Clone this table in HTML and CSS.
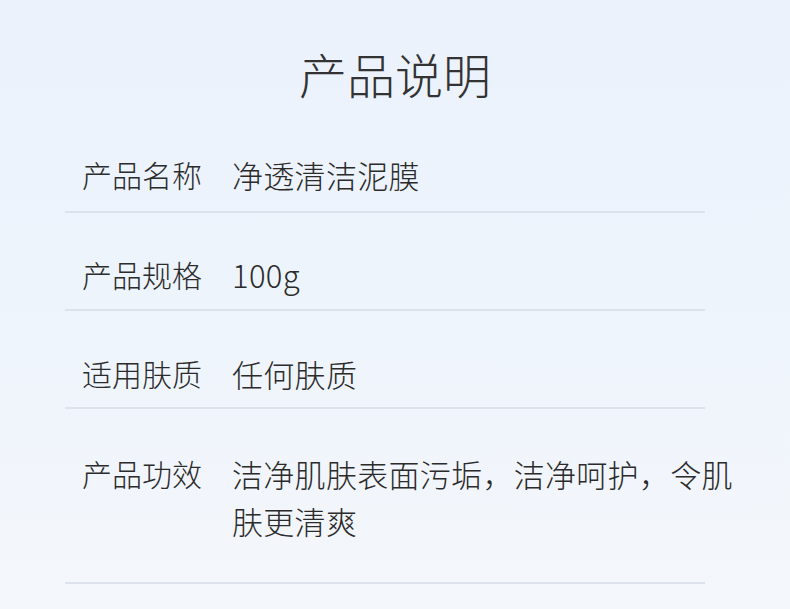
FILE: index.html
```html
<!DOCTYPE html>
<html lang="zh-CN">
<head>
<meta charset="utf-8">
<title>产品说明</title>
<link rel="stylesheet" href="styles.css">
</head>
<body>
<main class="page">
  <h1 class="title">产品说明</h1>
  <div class="table">
    <div class="row row-first">
      <div class="label">产品名称</div>
      <div class="value">净透清洁泥膜</div>
    </div>
    <div class="row">
      <div class="label">产品规格</div>
      <div class="value">100g</div>
    </div>
    <div class="row row-third">
      <div class="label">适用肤质</div>
      <div class="value">任何肤质</div>
    </div>
    <div class="row row-last">
      <div class="label">产品功效</div>
      <div class="value">洁净肌肤表面污垢，洁净呵护，令肌肤更清爽</div>
    </div>
  </div>
</main>
</body>
</html>
```

FILE: styles.css
```css
html, body {
  margin: 0;
  padding: 0;
}
body {
  width: 790px;
  height: 609px;
  overflow: hidden;
  background: linear-gradient(180deg, #ebf2fc 0%, #eef4fc 50%, #f4f7fb 100%);
  font-family: "Noto Sans CJK SC", "Noto Sans", sans-serif;
  font-weight: 300;
  color: #2b2b2b;
}
.page {
  padding-top: 45px;
}
.title {
  margin: 0 0 11px 0;
  text-align: center;
  font-size: 48px;
  line-height: 56px;
  font-weight: 300;
  color: #333;
}
.table {
  margin-left: 65px;
  width: 640px;
}
.row {
  display: flex;
  padding: 38px 0 11px 17px;
  border-bottom: 2px solid #dce3ec;
  font-size: 30px;
  line-height: 47px;
}
.row-first {
  padding-top: 39px;
  padding-bottom: 13px;
}
.row-third {
  padding-top: 39px;
  padding-bottom: 10px;
}
.row-last {
  padding-top: 41px;
  padding-bottom: 38px;
}
.label {
  flex: none;
  width: 150px;
}
.value {
  flex: none;
  width: 510px;
  font-size: 31px;
  letter-spacing: 0.3px;
}
```
